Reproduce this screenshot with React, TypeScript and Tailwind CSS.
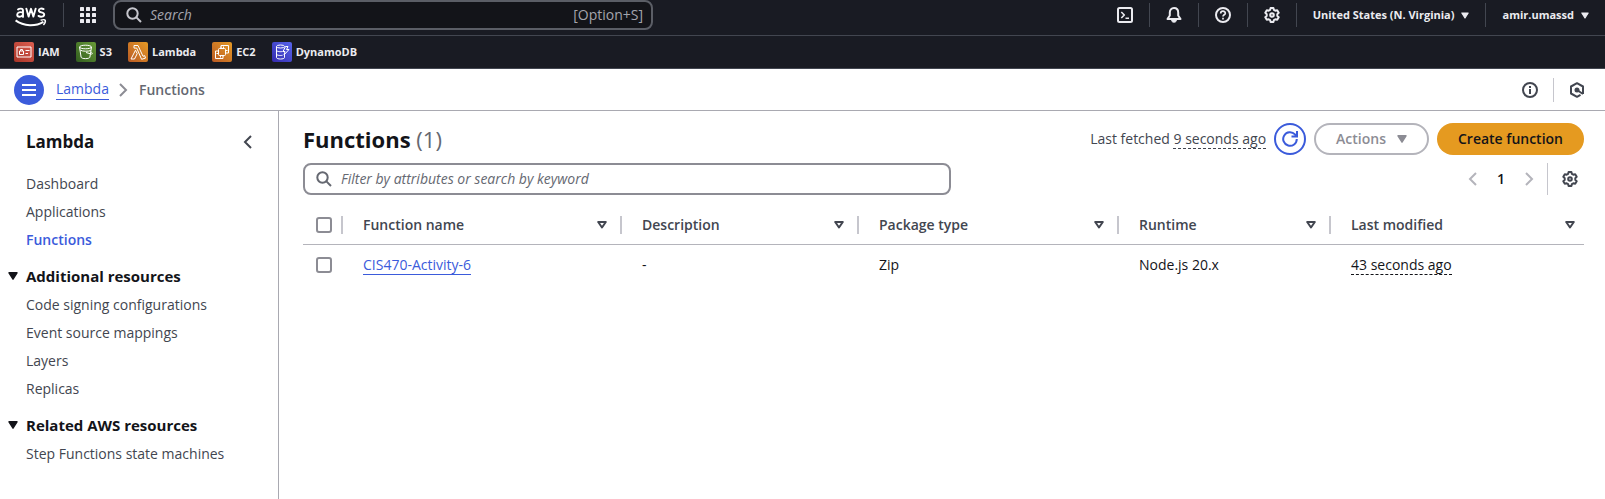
import React from 'react';

const stroke = { fill: 'none', stroke: 'currentColor', strokeWidth: 2, strokeLinejoin: 'round' as const };

function Caret({ className }: { className: string }) {
  return (
    <svg viewBox="0 0 10 8" className={className} aria-hidden="true">
      <path d="M1 .8h8L5 7.2z" fill="currentColor" stroke="currentColor" strokeWidth="1.4" strokeLinejoin="round" />
    </svg>
  );
}

function SearchIcon({ className }: { className: string }) {
  return (
    <svg viewBox="0 0 16 16" className={className} aria-hidden="true" {...stroke}>
      <circle cx="6.5" cy="6.5" r="5.2" />
      <path d="m10.4 10.4 4.6 4.6" />
    </svg>
  );
}

function GearIcon() {
  return (
    <svg viewBox="0 0 16 16" className="size-4 shrink-0" aria-hidden="true" {...stroke}>
      <path d="M6.6 1h2.8l.5 1.9 1.4.8 1.9-.5 1.5 2.5L13.3 7.1v1.8l1.4 1.4-1.5 2.5-1.9-.5-1.4.8-.5 1.9H6.6l-.5-1.9-1.4-.8-1.9.5-1.5-2.5L2.7 8.9V7.1L1.3 5.7l1.5-2.5 1.9.5 1.4-.8z" />
      <circle cx="8" cy="8" r="1.8" />
    </svg>
  );
}

function AwsLogo() {
  return (
    <svg viewBox="0 0 32 20" className="h-5 w-8" role="img" aria-label="AWS" fill="none" stroke="#fff">
      <g strokeWidth="1.9" strokeLinejoin="round" strokeLinecap="round">
        <path d="M3 2.5C4.2 1.5 8 .9 8 3.7v6.2M8 5.6C5.5 4.7 2.2 5.2 2.2 7.7s4 3.1 5.800-.1" />
        <path d="m11.3 1.6 2.3 8 2.4-7.800 2.400 7.800 2.300-8" />
        <path d="M28.6 2.1c-1.5-.9-4.8-.9-4.8 1.3 0 2.6 5.4 1.5 5.4 4.2 0 2.5-4 2.5-5.7 1.3" />
      </g>
      <path d="M.6 13.4c8.3 6.2 20.2 6.1 27.8 1.4" strokeWidth="2" />
      <path d="M25.6 13.3c2.2-.7 4.3-.6 4.6 0 .3.7-.2 2.9-1.8 4.6" strokeWidth="1.5" />
    </svg>
  );
}

const serviceArt = {
  IAM: (
    <>
      <rect x="3" y="5" width="14" height="10" />
      <rect x="5.5" y="9" width="4" height="3.5" />
      <path d="M6.5 9V7.5h2V9M11.5 8.5h4M11.5 11.5h2.5" />
    </>
  ),
  S3: (
    <>
      <ellipse cx="9.5" cy="5" rx="6" ry="1.8" />
      <path d="m3.5 5 1.6 10.2c.4 1.9 8.4 1.9 8.8 0L15.5 5M4.4 8.2c2 1.3 8 1.3 10.5.3M10 10.5l5.5 1.6c1.2.2 1-1-.3-2.1" />
    </>
  ),
  Lambda: (
    <>
      <path d="M6 3.5h4l5 10.8 1.7-.7.8 2.5-3.9 1.2L8.7 6.1H6z" />
      <path d="m7.5 8.2 1.7 3.5L6.5 17H3z" />
    </>
  ),
  EC2: (
    <>
      <path d="M9 6V3.5h7.5V11H14M6 9H3.5v7.5H11V14" />
      <rect x="6.5" y="6.5" width="7" height="7" rx="1" />
      <path d="M9 4.5v2M11.5 4.5v2M13.5 8.5h2M4.5 11.5h2M8.5 13.5v2M11 13.5v1" />
    </>
  ),
  DynamoDB: (
    <>
      <ellipse cx="8.5" cy="4.5" rx="4" ry="1.5" />
      <path d="M4.5 4.5v11c0 2 8 2 8 0V13M4.5 8.2c0 1.5 4 1.7 6 1.3M4.5 12c0 1.5 4 1.7 6 1.3M13.5 4.5H16l-1.5 3H17l-5 5.5 1-3.5h-2z" />
    </>
  ),
};

const services: { name: keyof typeof serviceArt; tone: string }[] = [
  { name: 'IAM', tone: 'from-[#a83427] to-[#dc5f51]' },
  { name: 'S3', tone: 'from-[#325f20] to-[#699b37]' },
  { name: 'Lambda', tone: 'from-[#b95a24] to-[#e59a25]' },
  { name: 'EC2', tone: 'from-[#b95a24] to-[#e59a25]' },
  { name: 'DynamoDB', tone: 'from-[#3529ae] to-[#5865ed]' },
];

function Tool({ label, children }: { label: string; children: React.ReactNode }) {
  return (
    <>
      <button aria-label={label} className="flex w-12 justify-center text-[#ebebf0]">{children}</button>
      <span className="h-6 w-px bg-[#424650]" />
    </>
  );
}

function TopBar() {
  return (
    <header className="bg-[#191b23] text-[#ebebf0]">
      <div className="flex h-9 items-start justify-between border-b border-[#424650]">
        <div className="flex items-center">
          <a href="#" className="ml-[15px] mt-1"><AwsLogo /></a>
          <span className="ml-4 h-6 w-px bg-[#424650]" />
          <button aria-label="Services" className="ml-4">
            <svg viewBox="0 0 16 16" className="size-4" fill="currentColor">
              {[0, 6, 12].map((y) => [0, 6, 12].map((x) => <rect key={`${x}-${y}`} x={x} y={y} width="4" height="4" rx=".6" />))}
            </svg>
          </button>
          <label className="ml-[17px] flex h-[30px] w-[540px] items-center rounded-lg border-2 border-[#5b5e66] bg-[#131419] pl-[11px] pr-2 text-[#a4a4ad]">
            <SearchIcon className="size-4 shrink-0 text-[#c6c6cd]" />
            <input aria-label="Search" placeholder="Search" className="ml-2 min-w-0 flex-1 bg-transparent text-sm italic outline-none placeholder:text-[#a4a4ad]" />
            <span className="text-sm">[Option+S]</span>
          </label>
        </div>
        <div className="flex h-[30px] items-center text-[11px] font-bold">
          <Tool label="CloudShell">
            <svg viewBox="0 0 16 16" className="size-4" {...stroke}>
              <rect x="1" y="1" width="14" height="14" rx="1.5" />
              <path d="m4.3 5 3 3-3 3M8.5 11.2h3.5" strokeWidth="1.6" />
            </svg>
          </Tool>
          <Tool label="Notifications">
            <svg viewBox="0 0 16 16" className="size-4" {...stroke}>
              <path d="M8 1C5.3 1 3.8 3 3.8 5.5v3L1.5 12h13l-2.3-3.5v-3C12.2 3 10.7 1 8 1z" />
              <path d="M5.5 13.5c.5 2.3 4.5 2.3 5 0z" fill="currentColor" strokeWidth="1" />
            </svg>
          </Tool>
          <Tool label="Help">
            <svg viewBox="0 0 16 16" className="size-4" {...stroke}>
              <circle cx="8" cy="8" r="7" />
              <path d="M5.7 6.5C5.7 3.4 10.3 3.6 10.3 6.2 10.3 7.8 8 7.8 8 9.6M8 10.8v1.8" strokeWidth="1.7" />
            </svg>
          </Tool>
          <Tool label="Settings"><GearIcon /></Tool>
          <button className="flex items-center gap-[7px] px-4">United States (N. Virginia)<Caret className="h-[7px] w-2" /></button>
          <span className="h-6 w-px bg-[#424650]" />
          <button className="flex items-center gap-[7px] px-4">amir.umassd<Caret className="h-[7px] w-2" /></button>
        </div>
      </div>
      <nav aria-label="Favorites" className="flex h-[33px] items-center gap-4 border-b border-[#424650] pl-[14px] text-[11px] font-bold">
        {services.map((s) => (
          <a key={s.name} href="#" className="flex items-center gap-1">
            <span className={`size-5 rounded-xs bg-linear-to-tr ${s.tone}`}>
              <svg viewBox="0 0 20 20" className="size-5" fill="none" stroke="#fff" strokeWidth="1" strokeLinejoin="round">{serviceArt[s.name]}</svg>
            </span>
            {s.name}
          </a>
        ))}
      </nav>
    </header>
  );
}

function Breadcrumbs() {
  return (
    <div className="flex h-[42px] items-center justify-between border-b border-[#a9a9b1] pl-[14px] pr-5">
      <div className="flex items-center text-sm font-semibold">
        <button aria-label="Open navigation" className="flex size-[30px] items-center justify-center rounded-full bg-[#3b5bdb] text-white">
          <svg viewBox="0 0 16 16" className="size-4" {...stroke}><path d="M1 3h14M1 8h14M1 13h14" /></svg>
        </button>
        <a href="#" className="ml-3 border-b border-[#3b5bdb] font-medium text-[#3b5bdb]">Lambda</a>
        <svg viewBox="0 0 16 16" className="mx-[6px] size-4 text-[#8c8c94]" {...stroke}><path d="m5 2 6 6-6 6" strokeLinejoin="miter" /></svg>
        <span className="ml-[2px] text-[#656871]">Functions</span>
      </div>
      <div className="flex items-center text-[#424650]">
        <button aria-label="Info">
          <svg viewBox="0 0 16 16" className="size-4" {...stroke}><circle cx="8" cy="8" r="7" /><path d="M8 7v5M8 4v2" /></svg>
        </button>
        <span className="mx-[15px] h-6 w-px bg-[#c6c6cd]" />
        <button aria-label="Assistant">
          <svg viewBox="0 0 16 16" className="size-4" {...stroke}><path d="M14 12V4.5L8 1.2 2 4.5v7l6 3.3 3.5-1.9M8 8l6 4" /><circle cx="8" cy="8" r="1.5" fill="currentColor" /></svg>
        </button>
      </div>
    </div>
  );
}

function NavLinks({ items, active }: { items: string[]; active?: string }) {
  return (
    <ul className="flex flex-col gap-2 pl-[26px] text-sm">
      {items.map((i) => (
        <li key={i} className="leading-5"><a href="#" className={i === active ? 'font-semibold text-[#3b5bdb]' : 'text-[#424650]'}>{i}</a></li>
      ))}
    </ul>
  );
}

function NavGroup({ title, items }: { title: string; items: string[] }) {
  return (
    <section className="mt-4">
      <button className="mb-[9px] flex items-center gap-2 pl-2 text-[15px] leading-5 font-bold text-[#131419]"><Caret className="h-2 w-[10px]" />{title}</button>
      <NavLinks items={items} />
    </section>
  );
}

function Sidebar() {
  return (
    <aside className="w-[279px] shrink-0 border-r border-[#a9a9b1] pt-[19px]">
      <div className="mb-5 flex items-center justify-between pl-[26px] pr-[22px]">
        <h2 className="text-[17px] leading-6 font-bold text-[#131419]">Lambda</h2>
        <button aria-label="Close navigation" className="text-[#424650]">
          <svg viewBox="0 0 16 16" className="size-4" {...stroke}><path d="m11 2-6 6 6 6" strokeLinejoin="miter" /></svg>
        </button>
      </div>
      <NavLinks items={['Dashboard', 'Applications', 'Functions']} active="Functions" />
      <NavGroup title="Additional resources" items={['Code signing configurations', 'Event source mappings', 'Layers', 'Replicas']} />
      <NavGroup title="Related AWS resources" items={['Step Functions state machines']} />
    </aside>
  );
}

const columns = [
  { name: 'Function name', width: 'w-[279px]' },
  { name: 'Description', width: 'w-[237px]' },
  { name: 'Package type', width: 'w-[260px]' },
  { name: 'Runtime', width: 'w-[212px]' },
  { name: 'Last modified', width: '' },
];

function Check({ label }: { label: string }) {
  return <input type="checkbox" aria-label={label} className="block size-4 appearance-none rounded-[3px] border-2 border-[#8c8c94] bg-white checked:bg-[#3b5bdb]" />;
}

function FunctionTable() {
  return (
    <table className="mt-3 w-full table-fixed text-left text-sm">
      <thead>
        <tr className="h-[37px] border-b border-[#b4b4bb] text-[#424650]">
          <th className="w-10 pl-[13px] pr-0">
            <div className="flex h-[18px] items-center justify-between border-r-2 border-[#c6c6cd]"><Check label="Select all functions" /></div>
          </th>
          {columns.map((c, i) => (
            <th key={c.name} className={`${c.width} pl-5 font-semibold`}>
              <div className={i < columns.length - 1 ? 'flex h-[18px] items-center justify-between border-r-2 border-[#c6c6cd] pr-[13px]' : 'flex h-[18px] items-center justify-between pr-[9px]'}>
                {c.name}
                <button aria-label={`Sort by ${c.name}`}>
                  <svg viewBox="0 0 10 8" className="h-2 w-[10px]" {...stroke}><path d="M1.2 1h7.6L5 6.5z" /></svg>
                </button>
              </div>
            </th>
          ))}
        </tr>
      </thead>
      <tbody>
        <tr className="h-[41px] text-[#131419]">
          <td className="pl-[13px]"><Check label="Select CIS470-Activity-6" /></td>
          <td className="pl-5"><a href="#" className="border-b border-[#3b5bdb] text-[#3b5bdb]">CIS470-Activity-6</a></td>
          <td className="pl-5">-</td>
          <td className="pl-5">Zip</td>
          <td className="pl-5">Node.js 20.x</td>
          <td className="pl-5"><span className="border-b border-dashed border-[#131419]">43 seconds ago</span></td>
        </tr>
      </tbody>
    </table>
  );
}

function Content() {
  return (
    <main className="min-w-0 flex-1 pl-6 pr-[21px] pt-3">
      <div className="flex h-8 items-center justify-between">
        <h1 className="text-[22px] font-bold text-[#131419]">Functions <span className="font-normal text-[#656871]">(1)</span></h1>
        <div className="flex items-center gap-2 text-sm font-semibold">
          <p className="font-normal text-[#424650]">Last fetched <span className="border-b border-dashed border-[#424650]">9 seconds ago</span></p>
          <button aria-label="Refresh" className="flex size-8 items-center justify-center rounded-full border-2 border-[#3b5bdb] text-[#3b5bdb]">
            <svg viewBox="0 0 16 16" className="size-4" {...stroke}><path d="M14.8 8A6.8 6.8 0 1 1 13 3.4L14.5 5M15 0v5.5H9.5" strokeLinejoin="miter" /></svg>
          </button>
          <button className="flex h-8 items-center gap-[11px] rounded-full border-2 border-[#b4b4bb] px-5 text-[#8c8c94]">Actions<Caret className="h-2 w-[10px]" /></button>
          <button className="h-8 rounded-full bg-[#e59a20] px-[21px] text-[#131419]">Create function</button>
        </div>
      </div>
      <div className="mt-2 flex items-center justify-between">
        <label className="flex h-8 w-[648px] items-center rounded-lg border-2 border-[#8c8c94] px-[11px]">
          <SearchIcon className="size-4 shrink-0 text-[#656871]" />
          <input aria-label="Filter functions" placeholder="Filter by attributes or search by keyword" className="ml-[9px] min-w-0 flex-1 text-sm italic outline-none placeholder:text-[#656871]" />
        </label>
        <div className="flex items-center pr-[6px] text-sm font-semibold text-[#b4b4bb]">
          <button aria-label="Previous page"><svg viewBox="0 0 16 16" className="size-4" {...stroke}><path d="m11 2-6 6 6 6" strokeLinejoin="miter" /></svg></button>
          <button className="w-10 text-[#131419]">1</button>
          <button aria-label="Next page"><svg viewBox="0 0 16 16" className="size-4" {...stroke}><path d="m5 2 6 6-6 6" strokeLinejoin="miter" /></svg></button>
          <span className="ml-[10px] mr-[14px] h-8 w-px bg-[#c6c6cd]" />
          <button aria-label="Preferences" className="text-[#424650]"><GearIcon /></button>
        </div>
      </div>
      <FunctionTable />
    </main>
  );
}

export default function App() {
  return (
    <div className="flex min-h-screen flex-col bg-white font-['Open_Sans',sans-serif]">
      <TopBar />
      <Breadcrumbs />
      <div className="flex flex-1">
        <Sidebar />
        <Content />
      </div>
    </div>
  );
}
